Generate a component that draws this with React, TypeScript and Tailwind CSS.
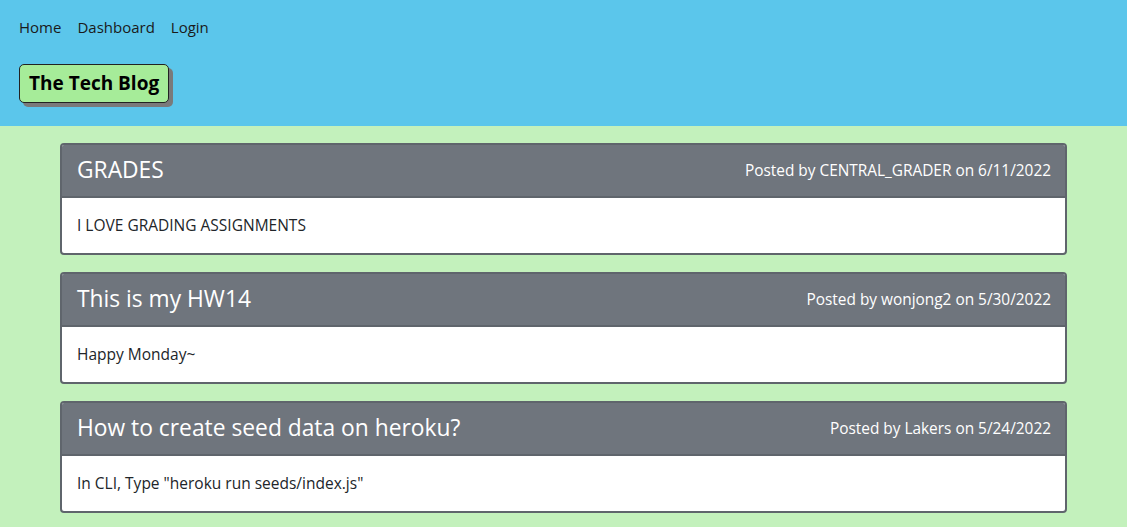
import React from "react";

const posts = [
  { title: "GRADES", author: "CENTRAL_GRADER", date: "6/11/2022", body: "I LOVE GRADING ASSIGNMENTS" },
  { title: "This is my HW14", author: "wonjong2", date: "5/30/2022", body: "Happy Monday~" },
  { title: "How to create seed data on heroku?", author: "Lakers", date: "5/24/2022", body: 'In CLI, Type "heroku run seeds/index.js"' },
];

export default function App() {
  return (
    <div className="min-h-[527px] bg-[#c3f1bc] text-[#212529]" style={{ fontFamily: '"Open Sans", "Noto Sans", sans-serif' }}>
      <header className="bg-[#5bc6eb] h-[126px] pl-[19px] pt-[16px]">
        <nav className="flex gap-[16px] text-[15px] leading-[22px] text-[#1a1a1a]">
          <span>Home</span>
          <span>Dashboard</span>
          <span>Login</span>
        </nav>
        <div className="mt-[26px] inline-block">
          <div className="bg-[#a6ec99] border border-[#222] rounded-[5px] px-[9px] h-[39px] flex items-center text-[19px] font-bold text-black shadow-[4px_4px_0_#7a7a7a]">
            The Tech Blog
          </div>
        </div>
      </header>
      <main className="mx-[60px] pt-[17px] flex flex-col gap-[17px]">
        {posts.map((p) => (
          <div key={p.title} className="border-2 border-[#5f656c] rounded-[4px] overflow-hidden bg-white">
            <div className="bg-[#6f757d] h-[53px] flex items-center justify-between pl-[15px] pr-[14px] border-b-2 border-[#5f656c] text-white">
              <span className="text-[22.8px]">{p.title}</span>
              <span className="text-[15.4px]">Posted by {p.author} on {p.date}</span>
            </div>
            <div className="h-[55px] flex items-center px-[15px] text-[15.5px]">{p.body}</div>
          </div>
        ))}
      </main>
    </div>
  );
}
